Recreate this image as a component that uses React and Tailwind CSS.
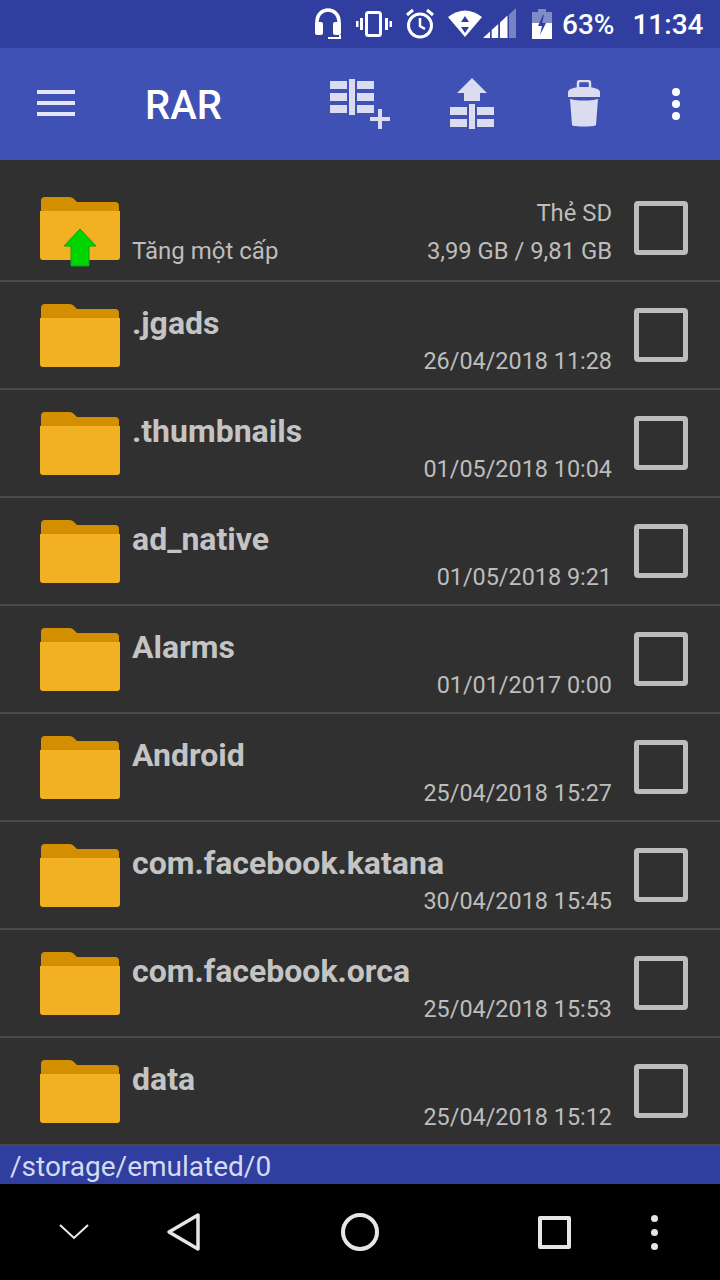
import React from 'react';

const rows = [
  { name: '.jgads', date: '26/04/2018 11:28' },
  { name: '.thumbnails', date: '01/05/2018 10:04' },
  { name: 'ad_native', date: '01/05/2018 9:21' },
  { name: 'Alarms', date: '01/01/2017 0:00' },
  { name: 'Android', date: '25/04/2018 15:27' },
  { name: 'com.facebook.katana', date: '30/04/2018 15:45' },
  { name: 'com.facebook.orca', date: '25/04/2018 15:53' },
  { name: 'data', date: '25/04/2018 15:12' },
];

function Folder({ up }) {
  return (
    <svg width="84" height="72" viewBox="0 0 84 72" className="shrink-0">
      <path d="M3 6a4 4 0 0 1 4-4h24c3 0 4 1 6 3l2 2h38a4 4 0 0 1 4 4v10H3z" fill="#d48f00" />
      <path d="M2 16h80v46a3 3 0 0 1-3 3H5a3 3 0 0 1-3-3z" fill="#f1b122" />
      {up && <path d="M42 34l16 17H51v20H33V51H26z" fill="#00d400" stroke="#0aa51a" strokeWidth="1" />}
    </svg>
  );
}

function Checkbox() {
  return <div className="w-[54px] h-[54px] shrink-0 rounded-[4px] border-[5px] border-[#bdbdbd]" />;
}

function StatusIcons() {
  return (
    <svg width="204" height="48" viewBox="0 0 204 48" className="shrink-0">
      {/* headset */}
      <path d="M3 29V21a11 11 0 0 1 22 0v8" fill="none" stroke="#fff" strokeWidth="3.5" />
      <rect x="1" y="22" width="8" height="13" rx="2" fill="#fff" />
      <rect x="19" y="22" width="8" height="13" rx="2" fill="#fff" />
      <path d="M14 38h12v-3" fill="none" stroke="#fff" strokeWidth="2" />
      {/* vibrate */}
      <rect x="52.5" y="12.5" width="14" height="23" rx="2" fill="none" stroke="#fff" strokeWidth="3" />
      <rect x="46" y="18" width="3" height="12" fill="#fff" />
      <rect x="71" y="18" width="3" height="12" fill="#fff" />
      <rect x="42" y="21" width="2.5" height="6" fill="#fff" />
      <rect x="75.5" y="21" width="2.5" height="6" fill="#fff" />
      {/* alarm */}
      <circle cx="106" cy="25.5" r="11.5" fill="none" stroke="#fff" strokeWidth="3" />
      <path d="M106 18v8l5 3" fill="none" stroke="#fff" strokeWidth="2.5" />
      <path d="M93 15l6-5M119 15l-6-5" stroke="#fff" strokeWidth="3" />
      {/* wifi */}
      <path d="M134 17q17-13 34 0l-17 20z" fill="#fff" />
      <path d="M151 16l-4 6h8zM151 33l-4-6h8z" fill="#303f9f" />
      {/* signal */}
      <path d="M169 38l7-6.5V38zM177.7 38V30l6.5-6v14zM186 38V22.5l7.5-7V38z" fill="#fff" />
      <path d="M195 14.5l7-6.5v30h-7z" fill="#fff" fillOpacity="0.35" />
    </svg>
  );
}

function Battery() {
  return (
    <svg width="20" height="30" viewBox="0 0 20 30" className="shrink-0">
      <path d="M6 0h8v3h6v11H0V3h6z" fill="#fff" fillOpacity="0.4" />
      <path d="M0 14h20v16H0z" fill="#fff" />
      <path d="M11 6l-5 11h4l-2 9 6-12h-4l2-8z" fill="#303f9f" />
    </svg>
  );
}

function Toolbar() {
  const c = '#dcdcf0';
  return (
    <header className="h-[112px] bg-[#3f51b5] flex items-center shrink-0">
      <div className="ml-[37px] mb-[2px] w-[38px] flex flex-col gap-[7px]">
        <div className="h-[4px] bg-[#e4e6f5]" />
        <div className="h-[4px] bg-[#e4e6f5]" />
        <div className="h-[4px] bg-[#e4e6f5]" />
      </div>
      <div className="ml-[70px] mt-[4px] w-[100px] text-[40px] font-medium text-white leading-none">RAR</div>
      <svg width="62" height="54" viewBox="330 80 62 54" className="ml-[85px] shrink-0">
        <path d="M330 84h17v8h-17zM330 96h17v8h-17zM330 108h17v8h-17zM357 84h17v8h-17zM357 96h17v8h-17zM357 108h17v8h-17zM349 82h6v36h-6zM370 120h20v4h-20zM378 112h4v20h-4z" fill={c} />
      </svg>
      <svg width="44" height="52" viewBox="450 79 44 52" className="ml-[58px] shrink-0">
        <path d="M472 79l15 15h-7v8h-16v-8h-7zM450 108h17v8h-17zM450 120h17v8h-17zM477 108h17v8h-17zM477 120h17v8h-17zM469 105h6v25h-6z" fill={c} />
      </svg>
      <svg width="34" height="48" viewBox="567 80 34 48" className="ml-[73px] shrink-0">
        <path d="M578 90v-7a2 2 0 0 1 2-2h8a2 2 0 0 1 2 2v7" fill="none" stroke={c} strokeWidth="2.5" />
        <path d="M568 92c0-3 6-5 16-5s16 2 16 5v5H568z" fill={c} />
        <path d="M570 99c8 2 20 2 28 0l-2 26c-1 2-24 2-24 0z" fill={c} />
      </svg>
      <div className="ml-[71px] flex flex-col gap-[4px]">
        <div className="w-2 h-2 rounded-full bg-white" />
        <div className="w-2 h-2 rounded-full bg-white" />
        <div className="w-2 h-2 rounded-full bg-white" />
      </div>
    </header>
  );
}

function FileRow({ name, date }) {
  return (
    <div className="h-[108px] border-b-2 border-[#4a4a4a] flex">
      <div className="ml-[38px] mt-[20px] w-[94px] shrink-0">
        <Folder />
      </div>
      <div className="w-[480px] shrink-0 flex flex-col">
        <div className="mt-[21px] h-[40px] text-[32px] leading-[40px] font-bold text-[#c4c4c4] whitespace-nowrap">{name}</div>
        <div className="mt-[3px] text-[23.4px] leading-[30px] text-[#bdbdbd] text-right whitespace-nowrap">{date}</div>
      </div>
      <div className="ml-[22px] mt-[26px]">
        <Checkbox />
      </div>
    </div>
  );
}

export default function App() {
  return (
    <div className="w-[720px] h-[1280px] flex flex-col overflow-hidden bg-[#303030] font-['Roboto',sans-serif]">
      <div className="h-[48px] bg-[#303f9f] flex items-center shrink-0">
        <div className="ml-[314px]"><StatusIcons /></div>
        <div className="ml-[14px]"><Battery /></div>
        <div className="ml-[10px] mt-[2px] text-[28px] font-medium text-white leading-none">63%</div>
        <div className="ml-[18px] mt-[2px] text-[28px] font-medium text-white leading-none">11:34</div>
      </div>
      <Toolbar />
      <div className="flex-1 pt-[14px]">
        <div className="h-[108px] border-b-2 border-[#4a4a4a] flex">
          <div className="ml-[38px] mt-[21px] w-[94px] shrink-0">
            <Folder up />
          </div>
          <div className="w-[480px] shrink-0 flex justify-between">
            <div className="mt-[61px] text-[24px] leading-[32px] text-[#bdbdbd]">Tăng một cấp</div>
            <div className="mt-[23px] text-right text-[23.8px] text-[#bdbdbd]">
              <div className="leading-[32px]">Thẻ SD</div>
              <div className="mt-[6px] leading-[32px]">3,99 GB / 9,81 GB</div>
            </div>
          </div>
          <div className="ml-[22px] mt-[27px]">
            <Checkbox />
          </div>
        </div>
        {rows.map((r) => (
          <FileRow key={r.name} name={r.name} date={r.date} />
        ))}
      </div>
      <div className="h-[38px] bg-[#303f9f] pl-[10px] text-[28px] leading-[42px] text-[#d6daf0] shrink-0">/storage/emulated/0</div>
      <div className="h-[96px] bg-black flex items-center shrink-0">
        <svg width="34" height="18" viewBox="0 0 34 18" className="ml-[58px] shrink-0">
          <path d="M2 2l14 13L30 2" fill="none" stroke="#eee" strokeWidth="2" />
        </svg>
        <svg width="36" height="40" viewBox="0 0 36 40" className="ml-[74px] shrink-0">
          <path d="M32 3v34L3 20z" fill="none" stroke="#e6e6e6" strokeWidth="3.5" strokeLinejoin="round" />
        </svg>
        <div className="ml-[139px] w-[38px] h-[38px] rounded-full border-[4px] border-[#e6e6e6] shrink-0" />
        <div className="ml-[159px] w-[33px] h-[33px] rounded-[2px] border-[4px] border-[#e6e6e6] shrink-0" />
        <div className="ml-[80px] flex flex-col gap-[7px]">
          <div className="w-[7px] h-[7px] rounded-full bg-[#e6e6e6]" />
          <div className="w-[7px] h-[7px] rounded-full bg-[#e6e6e6]" />
          <div className="w-[7px] h-[7px] rounded-full bg-[#e6e6e6]" />
        </div>
      </div>
    </div>
  );
}
